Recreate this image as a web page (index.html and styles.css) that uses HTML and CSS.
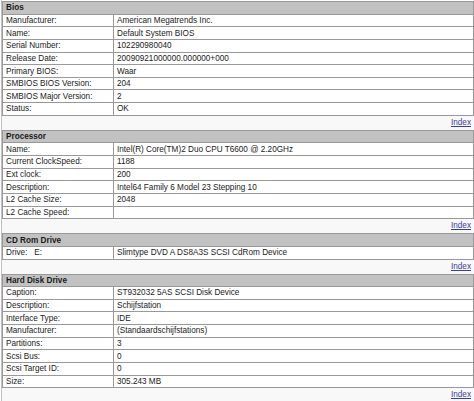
FILE: index.html
```html
<!DOCTYPE html>
<html>
<head>
<meta charset="utf-8">
<link rel="stylesheet" href="styles.css">
</head>
<body>
<div class="page">
  <section class="sect">
    <table class="info">
      <colgroup><col class="ck"><col></colgroup>
      <tr><th colspan="2">Bios</th></tr>
      <tr><td>Manufacturer:</td><td>American Megatrends Inc.</td></tr>
      <tr><td>Name:</td><td>Default System BIOS</td></tr>
      <tr><td>Serial Number:</td><td>102290980040</td></tr>
      <tr><td>Release Date:</td><td>20090921000000.000000+000</td></tr>
      <tr><td>Primary BIOS:</td><td>Waar</td></tr>
      <tr><td>SMBIOS BIOS Version:</td><td>204</td></tr>
      <tr><td>SMBIOS Major Version:</td><td>2</td></tr>
      <tr><td>Status:</td><td>OK</td></tr>
    </table>
    <div class="idx"><a href="#">Index</a></div>
  </section>
  <section class="sect">
    <table class="info">
      <colgroup><col class="ck"><col></colgroup>
      <tr><th colspan="2">Processor</th></tr>
      <tr><td>Name:</td><td>Intel(R) Core(TM)2 Duo CPU T6600 @ 2.20GHz</td></tr>
      <tr><td>Current ClockSpeed:</td><td>1188</td></tr>
      <tr><td>Ext clock:</td><td>200</td></tr>
      <tr><td>Description:</td><td>Intel64 Family 6 Model 23 Stepping 10</td></tr>
      <tr><td>L2 Cache Size:</td><td>2048</td></tr>
      <tr><td>L2 Cache Speed:</td><td></td></tr>
    </table>
    <div class="idx"><a href="#">Index</a></div>
  </section>
  <section class="sect">
    <table class="info">
      <colgroup><col class="ck"><col></colgroup>
      <tr><th colspan="2">CD Rom Drive</th></tr>
      <tr><td>Drive:&nbsp;&nbsp; E:</td><td>Slimtype DVD A DS8A3S SCSI CdRom Device</td></tr>
    </table>
    <div class="idx"><a href="#">Index</a></div>
  </section>
  <section class="sect">
    <table class="info">
      <colgroup><col class="ck"><col></colgroup>
      <tr><th colspan="2">Hard Disk Drive</th></tr>
      <tr><td>Caption:</td><td>ST932032 5AS SCSI Disk Device</td></tr>
      <tr><td>Description:</td><td>Schijfstation</td></tr>
      <tr><td>Interface Type:</td><td>IDE</td></tr>
      <tr><td>Manufacturer:</td><td>(Standaardschijfstations)</td></tr>
      <tr><td>Partitions:</td><td>3</td></tr>
      <tr><td>Scsi Bus:</td><td>0</td></tr>
      <tr><td>Scsi Target ID:</td><td>0</td></tr>
      <tr><td>Size:</td><td>305.243 MB</td></tr>
    </table>
    <div class="idx"><a href="#">Index</a></div>
  </section>
</div>
</body>
</html>
```

FILE: styles.css
```css
html, body {
  margin: 0;
  padding: 0;
  background: #ffffff;
}
.page {
  width: 472px;
  margin-left: 1px;
  padding-top: 1px;
  border-left: 1px solid #c0c0c0;
  font-family: "Liberation Sans", Arial, sans-serif;
  font-size: 8.2px;
  color: #1a1a1a;
}
.info {
  width: 472px;
  border-collapse: collapse;
  table-layout: fixed;
}
.info col.ck {
  width: 111px;
}
.info th, .info td {
  height: 11.65px;
  padding: 0 0 0 3px;
  border: 1px solid #999999;
  text-align: left;
  line-height: 11px;
  white-space: nowrap;
  overflow: hidden;
}
.info th {
  background: #c2c2c2;
  font-weight: bold;
}
.idx {
  height: 14px;
  line-height: 14px;
  text-align: right;
  padding-right: 3px;
  background: #f8f8f8;
}
.idx a {
  color: #3b3b9c;
  text-decoration: underline;
}
```
